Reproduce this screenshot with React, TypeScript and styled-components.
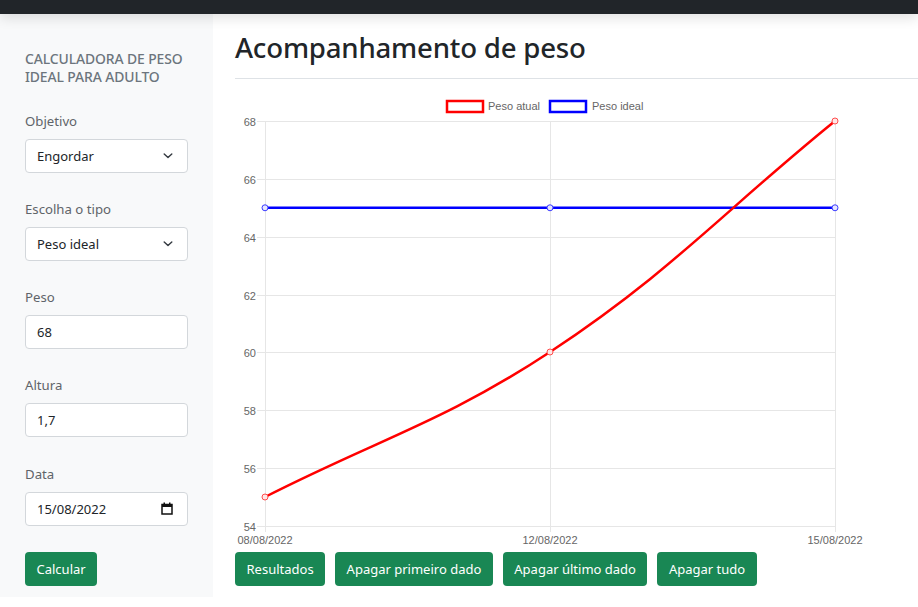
import React from "react";
import styled, { createGlobalStyle } from "styled-components";

const GlobalStyle = createGlobalStyle`
  html, body { margin: 0; padding: 0; background: #fff; }
  body {
    font-family: "Noto Sans", "Open Sans", sans-serif;
    color: #212529;
    -webkit-font-smoothing: antialiased;
  }
  * { box-sizing: border-box; }
`;

const TopBar = styled.header`
  height: 14px;
  background: #212529;
  position: relative;
  z-index: 2;
  box-shadow: 0 3px 14px rgba(0, 0, 0, 0.14);
`;

const Layout = styled.div`
  display: flex;
  align-items: flex-start;
`;

const Sidebar = styled.nav`
  width: 213px;
  flex: 0 0 213px;
  background: #f8f9fa;
  padding: 36px 25px 11px 25px;
`;

const SideHeading = styled.h6`
  margin: 0 0 24.5px 0;
  font-size: 13.9px;
  font-weight: 500;
  line-height: 18px;
  text-transform: uppercase;
  color: #6c757d;
  letter-spacing: -0.1px;
`;

const Field = styled.div`
  display: flex;
  flex-direction: column;
  margin-bottom: 26.25px;
`;

const Label = styled.label`
  font-size: 13.2px;
  line-height: 21px;
  color: #5f6469;
  margin-bottom: 7px;
`;

const Control = styled.div`
  height: 34px;
  width: 163px;
  background: #fff;
  border: 1px solid #d3d7db;
  border-radius: 4px;
  padding: 0 14px 0 11px;
  display: flex;
  align-items: center;
  justify-content: space-between;
  font-size: 13px;
  color: #212529;
`;

const Button = styled.button`
  height: 34px;
  padding: 0 11.5px;
  border: none;
  border-radius: 4px;
  background: #198754;
  color: #fff;
  font-family: inherit;
  font-size: 13px;
  line-height: 34px;
  cursor: pointer;
  white-space: nowrap;
`;

const Main = styled.main`
  flex: 1;
  padding-left: 22px;
  min-width: 0;
`;

const Heading = styled.div`
  padding: 16px 0 13px 0;
  border-bottom: 1px solid #dee2e6;
  margin-bottom: 9px;
`;

const Title = styled.h1`
  margin: 0;
  font-size: 27.6px;
  font-weight: 500;
  line-height: 35px;
  color: #212529;
  letter-spacing: -0.2px;
`;

const ChartSvg = styled.svg`
  display: block;
  font-family: "Liberation Sans", Arial, sans-serif;
`;

const ButtonRow = styled.div`
  display: flex;
  gap: 10px;
  margin-top: 4px;
`;

const Chevron = () => (
  <svg width="10" height="6" viewBox="0 0 10 6">
    <path d="M1.2 1 L5 4.6 L8.8 1" fill="none" stroke="#343a40" strokeWidth="1.4" strokeLinecap="round" strokeLinejoin="round" />
  </svg>
);

const CalendarIcon = () => (
  <svg width="12" height="13" viewBox="0 0 12 13">
    <rect x="1" y="2.5" width="10" height="9.5" fill="none" stroke="#111" strokeWidth="1.5" />
    <rect x="1" y="2" width="10" height="3" fill="#111" />
    <rect x="2.5" y="0.5" width="1.5" height="2.5" fill="#111" />
    <rect x="8" y="0.5" width="1.5" height="2.5" fill="#111" />
  </svg>
);

const yTicks = [68, 66, 64, 62, 60, 58, 56, 54];
const yOf = (v: number) => 121 + ((68 - v) * 405) / 14;
const xLabels: [number, string][] = [
  [265, "08/08/2022"],
  [550, "12/08/2022"],
  [835, "15/08/2022"],
];

const Chart = () => (
  <ChartSvg width={630} height={460} viewBox="235 88 630 460">
    {/* legend */}
    <rect x={447} y={101} width={36} height={11} fill="#fff" stroke="#ff0000" strokeWidth={2.5} />
    <text x={488} y={110} fontSize={11} fill="#666">Peso atual</text>
    <rect x={550} y={101} width={36} height={11} fill="#fff" stroke="#0000ff" strokeWidth={2.5} />
    <text x={592} y={110} fontSize={11} fill="#666">Peso ideal</text>

    {/* horizontal grid */}
    {yTicks.map((v) => {
      const y = Math.round(yOf(v)) + 0.5;
      return (
        <g key={v}>
          <line x1={257} x2={835} y1={y} y2={y} stroke="#e6e6e6" strokeWidth={1} />
          <text x={256} y={y + 4} fontSize={11} fill="#666" textAnchor="end">{v}</text>
        </g>
      );
    })}
    {/* vertical grid */}
    {xLabels.map(([x, t]) => (
      <g key={t}>
        <line x1={x + 0.5} x2={x + 0.5} y1={121} y2={532} stroke="#e6e6e6" strokeWidth={1} />
        <text x={x} y={544} fontSize={11} fill="#666" textAnchor="middle">{t}</text>
      </g>
    ))}

    {/* Peso ideal */}
    <line x1={265} x2={835} y1={yOf(65)} y2={yOf(65)} stroke="#0000ff" strokeWidth={2.5} />
    {[265, 550, 835].map((x) => (
      <circle key={x} cx={x} cy={yOf(65)} r={3} fill="#e6e6ff" stroke="#3b3bff" strokeWidth={1} />
    ))}

    {/* Peso atual */}
    <path
      d="M265,497 C379,439 443.8,422 550,352 C671.8,271.6 721,213.4 835,121"
      fill="none"
      stroke="#ff0000"
      strokeWidth={2.5}
    />
    {[
      [265, 497],
      [550, 352],
      [835, 121],
    ].map(([x, y]) => (
      <circle key={x} cx={x} cy={y} r={3} fill="#ffe6e6" stroke="#ff4d4d" strokeWidth={1} />
    ))}
  </ChartSvg>
);

export default function App() {
  return (
    <>
      <GlobalStyle />
      <TopBar />
      <Layout>
        <Sidebar>
          <SideHeading>
            Calculadora de peso
            <br />
            ideal para adulto
          </SideHeading>
          <Field>
            <Label>Objetivo</Label>
            <Control>
              <span>Engordar</span>
              <Chevron />
            </Control>
          </Field>
          <Field>
            <Label>Escolha o tipo</Label>
            <Control>
              <span>Peso ideal</span>
              <Chevron />
            </Control>
          </Field>
          <Field>
            <Label>Peso</Label>
            <Control>
              <span>68</span>
            </Control>
          </Field>
          <Field>
            <Label>Altura</Label>
            <Control>
              <span>1,7</span>
            </Control>
          </Field>
          <Field>
            <Label>Data</Label>
            <Control>
              <span>15/08/2022</span>
              <CalendarIcon />
            </Control>
          </Field>
          <Button>Calcular</Button>
        </Sidebar>
        <Main>
          <Heading>
            <Title>Acompanhamento de peso</Title>
          </Heading>
          <Chart />
          <ButtonRow>
            <Button>Resultados</Button>
            <Button>Apagar primeiro dado</Button>
            <Button>Apagar último dado</Button>
            <Button>Apagar tudo</Button>
          </ButtonRow>
        </Main>
      </Layout>
    </>
  );
}
